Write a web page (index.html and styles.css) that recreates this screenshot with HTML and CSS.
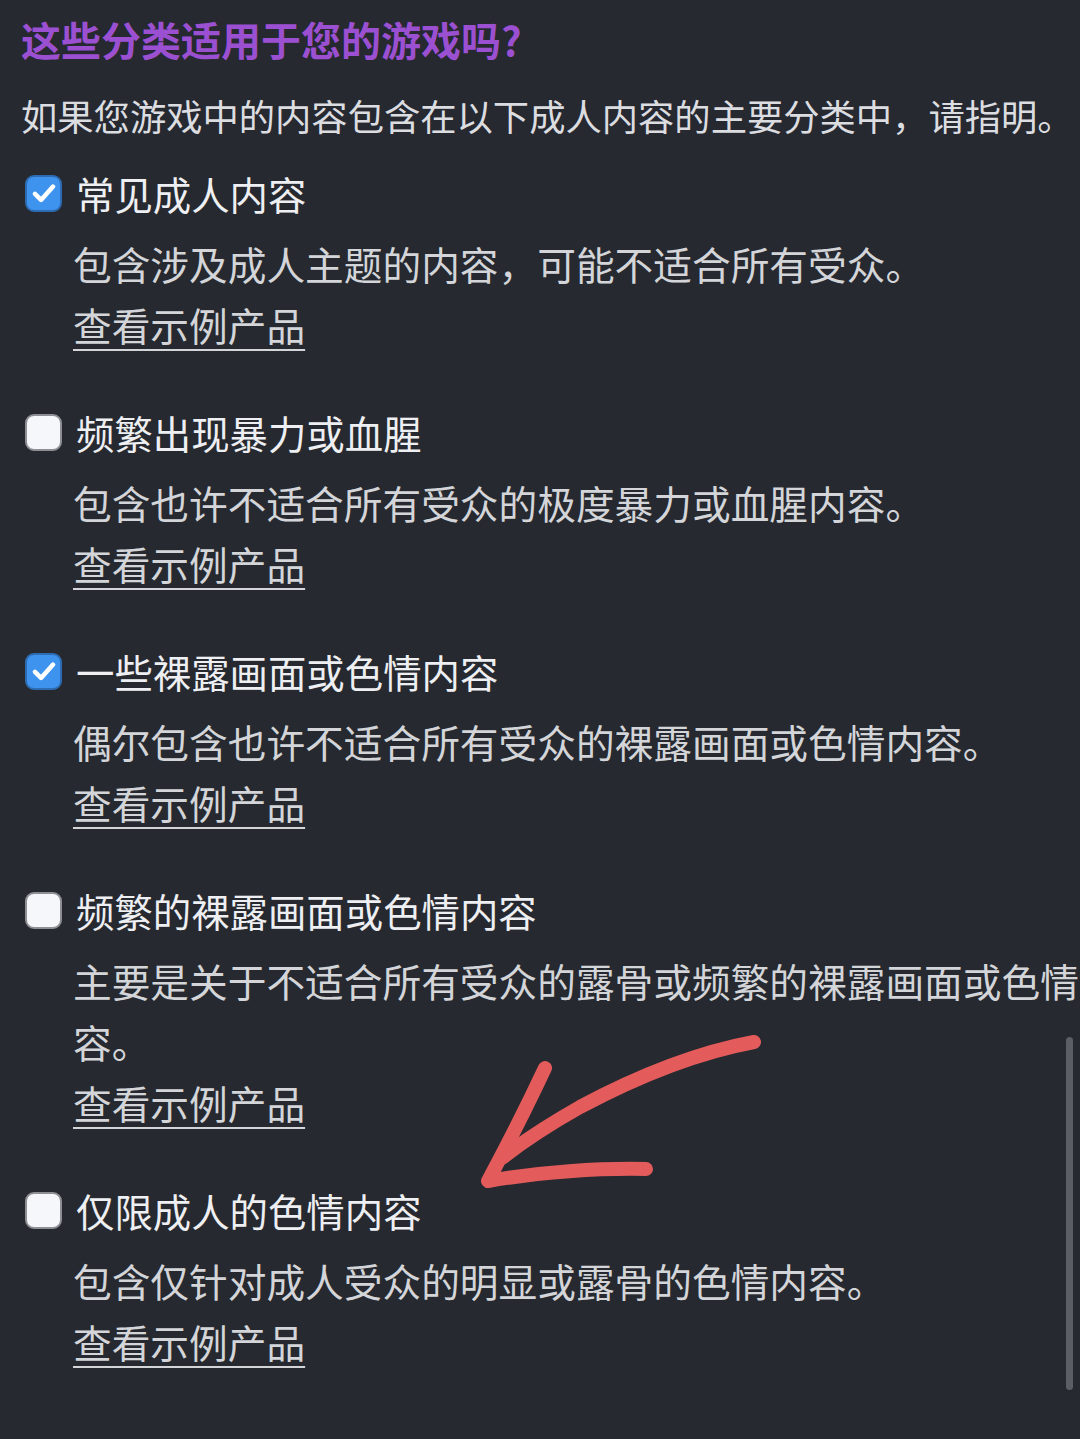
FILE: index.html
```html
<!DOCTYPE html>
<html lang="zh-CN">
<head>
<meta charset="utf-8">
<link rel="stylesheet" href="styles.css">
</head>
<body>
<main class="page">
  <h2 class="title">这些分类适用于您的游戏吗?</h2>
  <p class="intro">如果您游戏中的内容包含在以下成人内容的主要分类中，请指明。</p>
  <ul class="options">
    <li class="option">
      <div class="label-row"><span class="box checked"><svg viewBox="0 0 24 24" class="tick"><path d="M5.2 12.6l4.6 4.6L18.8 7.2" /></svg></span><span class="label">常见成人内容</span></div>
      <p class="desc">包含涉及成人主题的内容，可能不适合所有受众。</p>
      <a class="link">查看示例产品</a>
    </li>
    <li class="option">
      <div class="label-row"><span class="box"></span><span class="label">频繁出现暴力或血腥</span></div>
      <p class="desc">包含也许不适合所有受众的极度暴力或血腥内容。</p>
      <a class="link">查看示例产品</a>
    </li>
    <li class="option">
      <div class="label-row"><span class="box checked"><svg viewBox="0 0 24 24" class="tick"><path d="M5.2 12.6l4.6 4.6L18.8 7.2" /></svg></span><span class="label">一些裸露画面或色情内容</span></div>
      <p class="desc">偶尔包含也许不适合所有受众的裸露画面或色情内容。</p>
      <a class="link">查看示例产品</a>
    </li>
    <li class="option">
      <div class="label-row"><span class="box"></span><span class="label">频繁的裸露画面或色情内容</span></div>
      <p class="desc">主要是关于不适合所有受众的露骨或频繁的裸露画面或色情内容。</p>
      <a class="link">查看示例产品</a>
    </li>
    <li class="option">
      <div class="label-row"><span class="box"></span><span class="label">仅限成人的色情内容</span></div>
      <p class="desc">包含仅针对成人受众的明显或露骨的色情内容。</p>
      <a class="link">查看示例产品</a>
    </li>
  </ul>
</main>
<div class="scrollbar"></div>
<svg class="arrow" viewBox="0 0 1080 1439" width="1080" height="1439">
  <path d="M754 1042 C 700 1052, 640 1075, 580 1107 C 550 1124, 525 1140, 502 1158" />
  <path d="M545 1068 C 530 1100, 510 1140, 488 1181 C 540 1172, 600 1168, 646 1169" />
</svg>
</body>
</html>
```
FILE: styles.css
```css
html, body {
  margin: 0;
  padding: 0;
  background: #26292f;
  overflow: hidden;
  width: 1080px;
  height: 1439px;
}
body {
  position: relative;
  font-family: "Noto Sans CJK SC", "Noto Sans", sans-serif;
  color: #e6e7ea;
}
.page {
  width: 1130px;
  padding: 13px 0 0 21px;
  box-sizing: border-box;
}
.title {
  margin: 0;
  font-size: 40px;
  line-height: 52px;
  font-weight: 700;
  color: #9b50d2;
}
.intro {
  margin: 20px 0 0;
  font-size: 36.3px;
  line-height: 60px;
  color: #dcdde1;
  white-space: nowrap;
}
.options {
  list-style: none;
  margin: 18px 0 0;
  padding: 0;
}
.option {
  display: flex;
  flex-direction: column;
  align-items: flex-start;
  padding-bottom: 47px;
}
.label-row {
  display: flex;
  align-items: center;
  height: 60px;
  gap: 14px;
}
.box {
  width: 37px;
  height: 37px;
  box-sizing: border-box;
  border-radius: 9px;
  background: #f6f7fa;
  border: 2px solid #8d8f94;
  margin-left: 4px;
  display: flex;
  align-items: center;
  justify-content: center;
}
.box.checked {
  background: #3d93ee;
  border-color: #2d6cb2;
}
.tick {
  width: 32px;
  height: 32px;
}
.tick path {
  fill: none;
  stroke: #ffffff;
  stroke-width: 3.4;
  stroke-linecap: round;
  stroke-linejoin: round;
}
.label {
  font-size: 38.4px;
  line-height: 60px;
  color: #eeeff2;
}
.desc {
  margin: 10px 0 0 52px;
  width: 1055px;
  font-size: 38.7px;
  line-height: 61px;
  color: #d3d5d9;
}
.link {
  margin-left: 52px;
  font-size: 38.7px;
  line-height: 61px;
  color: #d3d5d9;
  text-decoration: underline;
  text-decoration-thickness: 2px;
  text-underline-offset: 8px;
}
.scrollbar {
  position: absolute;
  left: 1066px;
  top: 1037px;
  width: 7px;
  height: 353px;
  border-radius: 4px;
  background: #5b5e65;
}
.arrow {
  position: absolute;
  left: 0;
  top: 0;
  pointer-events: none;
}
.arrow path {
  fill: none;
  stroke: #e45b5b;
  stroke-width: 14;
  stroke-linecap: round;
  stroke-linejoin: round;
}
```
